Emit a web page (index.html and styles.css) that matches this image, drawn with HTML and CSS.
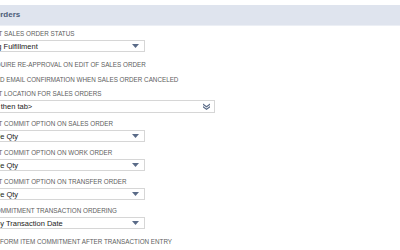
FILE: index.html
```html
<!DOCTYPE html>
<html lang="en">
<head>
  <meta charset="UTF-8">
  <title>Order Preferences</title>
  <link rel="stylesheet" href="styles.css">
</head>
<body>
  <div class="page">

    <!-- Section header -->
    <div class="section-head">Orders</div>

    <div class="field">
      <div class="label">Default Sales Order Status</div>
      <div class="select">
        <span class="value">Pending Fulfillment</span>
        <svg class="arrow" width="7" height="4" viewBox="0 0 7 4"><path d="M0 0h7L3.5 4z"/></svg>
      </div>
    </div>

    <div class="check">
      <span class="box"></span>
      <span class="label">Require Re-Approval on Edit of Sales Order</span>
    </div>
    <div class="check">
      <span class="box"></span>
      <span class="label">Send Email Confirmation When Sales Order Canceled</span>
    </div>

    <div class="field">
      <div class="label">Default Location for Sales Orders</div>
      <div class="select wide">
        <span class="value">&lt;Type then tab&gt;</span>
        <svg class="arrow" width="7" height="7" viewBox="0 0 7 7"><path d="M0 0.5l3.5 2.5L7 0.5V2L3.5 4.5 0 2zM0 3l3.5 2.5L7 3v1.5L3.5 7 0 4.5z"/></svg>
      </div>
    </div>

    <div class="field">
      <div class="label">Default Commit Option on Sales Order</div>
      <div class="select">
        <span class="value">Available Qty</span>
        <svg class="arrow" width="7" height="4" viewBox="0 0 7 4"><path d="M0 0h7L3.5 4z"/></svg>
      </div>
    </div>

    <div class="field">
      <div class="label">Default Commit Option on Work Order</div>
      <div class="select">
        <span class="value">Available Qty</span>
        <svg class="arrow" width="7" height="4" viewBox="0 0 7 4"><path d="M0 0h7L3.5 4z"/></svg>
      </div>
    </div>

    <div class="field">
      <div class="label">Default Commit Option on Transfer Order</div>
      <div class="select">
        <span class="value">Available Qty</span>
        <svg class="arrow" width="7" height="4" viewBox="0 0 7 4"><path d="M0 0h7L3.5 4z"/></svg>
      </div>
    </div>

    <div class="field">
      <div class="label">Item Commitment Transaction Ordering</div>
      <div class="select">
        <span class="value">Order By Transaction Date</span>
        <svg class="arrow" width="7" height="4" viewBox="0 0 7 4"><path d="M0 0h7L3.5 4z"/></svg>
      </div>
    </div>

    <div class="check">
      <span class="box"></span>
      <span class="label">Perform Item Commitment After Transaction Entry</span>
    </div>

  </div>
</body>
</html>
```

FILE: styles.css
```css
body {
  margin: 0;
  padding: 0;
  background-color: #fff;
  font-family: "Liberation Sans", Arial, sans-serif;
  overflow: hidden;
}

.page {
  margin-left: -27px;
  width: 450px;
  display: flex;
  flex-direction: column;
}

.section-head {
  margin-top: 5px;
  height: 20px;
  line-height: 20px;
  padding-left: 21px;
  background-color: #dfe4ee;
  border-bottom: 1px solid #eceff5;
  color: #4c5c78;
  font-size: 8px;
  font-weight: bold;
}

.label {
  display: block;
  height: 8px;
  line-height: 8px;
  font-size: 6.3px;
  color: #606060;
  text-transform: uppercase;
  white-space: nowrap;
}

.field {
  display: flex;
  flex-direction: column;
  gap: 2px;
  margin-top: 7px;
}

.field .label {
  padding-left: 1.5px;
}

.section-head + .field {
  margin-top: 4px;
}

.check + .field {
  margin-top: 3px;
}

.select {
  width: 172px;
  height: 12px;
  box-sizing: border-box;
  border: 1px solid #d6d6d6;
  background-color: #fff;
  display: flex;
  align-items: center;
  padding-left: 0;
  padding-right: 5px;
}

.select.wide {
  width: 242px;
  height: 13px;
  padding-left: 4px;
  padding-right: 4px;
}

.value {
  flex: 1;
  font-size: 7.5px;
  color: #222;
  white-space: nowrap;
}

.arrow {
  fill: #5a6b88;
}

.check {
  display: flex;
  align-items: center;
  height: 14px;
  margin-top: 1px;
}

.field + .check {
  margin-top: 6px;
}

.check .box {
  width: 9px;
  height: 9px;
  box-sizing: border-box;
  border: 1px solid #b9b9b9;
  margin-right: 5px;
}
```
